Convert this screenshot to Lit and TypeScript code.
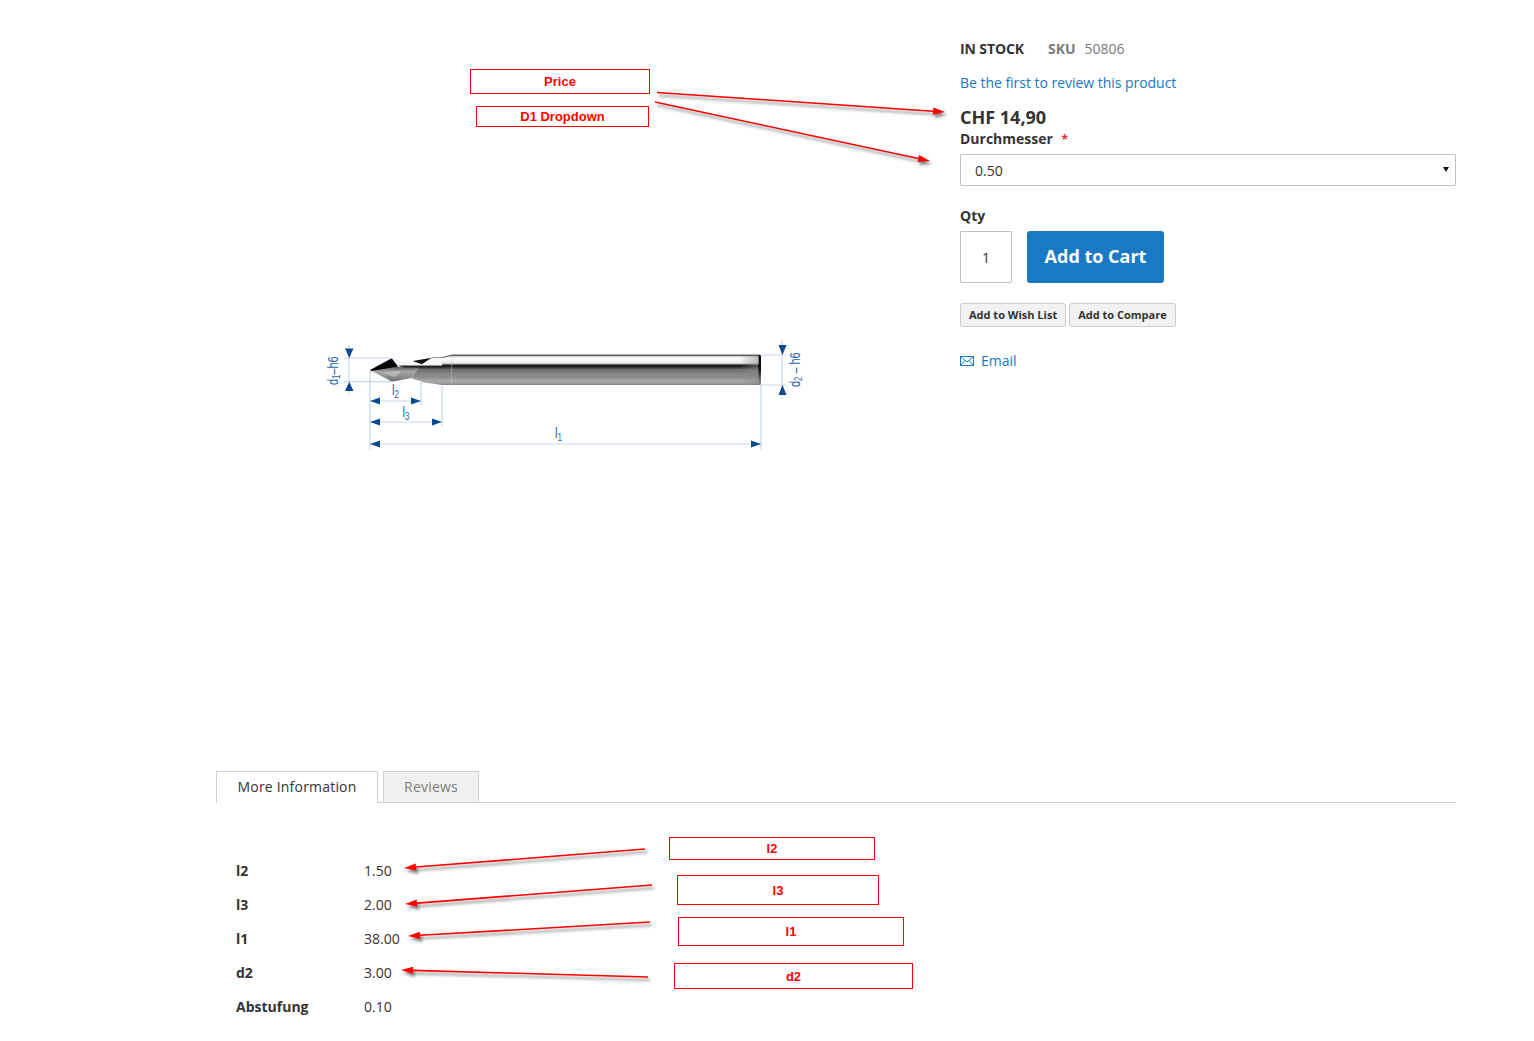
import { LitElement, html, css, svg } from "lit";
import { customElement } from "lit/decorators.js";

const BOXES = [
  { t: "Price", x: 470, y: 69, w: 180, h: 25 },
  { t: "D1 Dropdown", x: 476, y: 106, w: 173, h: 21 },
  { t: "l2", x: 669, y: 837, w: 206, h: 23 },
  { t: "l3", x: 677, y: 875, w: 202, h: 30 },
  { t: "l1", x: 678, y: 917, w: 226, h: 29 },
  { t: "d2", x: 674, y: 963, w: 239, h: 26 },
];

const ARROWS = [
  [657, 92.5, 945, 112],
  [655, 102, 930, 161],
  [645, 849, 404, 868],
  [652, 885, 405, 904],
  [650, 922, 408, 936],
  [648, 977, 401, 970],
];

const SPECS = [
  ["l2", "1.50"],
  ["l3", "2.00"],
  ["l1", "38.00"],
  ["d2", "3.00"],
  ["Abstufung", "0.10"],
];

function arrow([x1, y1, x2, y2]: number[]) {
  const a = Math.atan2(y2 - y1, x2 - x1);
  const L = 12, W = 3.6;
  const bx = x2 - L * Math.cos(a), by = y2 - L * Math.sin(a);
  const nx = -Math.sin(a) * W, ny = Math.cos(a) * W;
  return svg`<g class="red">
    <line x1=${x1} y1=${y1} x2=${bx} y2=${by}/>
    <path d="M${bx + nx} ${by + ny}L${x2} ${y2}L${bx - nx} ${by - ny}Z"/>
  </g>`;
}

const toolDrawing = svg`
  <svg class="tool" viewBox="320 340 490 115" width="490" height="115" aria-hidden="true">
    <defs>
      <linearGradient id="shaft" x1="0" y1="355" x2="0" y2="385" gradientUnits="userSpaceOnUse">
        <stop offset="0" stop-color="#444"/>
        <stop offset=".04" stop-color="#c8c8c8"/>
        <stop offset=".1" stop-color="#fff"/>
        <stop offset=".26" stop-color="#ececec"/>
        <stop offset=".3" stop-color="#aaa"/>
        <stop offset=".34" stop-color="#111"/>
        <stop offset=".4" stop-color="#2a2a2a"/>
        <stop offset=".48" stop-color="#6a6a6a"/>
        <stop offset=".62" stop-color="#858585"/>
        <stop offset=".76" stop-color="#909090"/>
        <stop offset=".86" stop-color="#aaa"/>
        <stop offset=".96" stop-color="#999"/>
        <stop offset="1" stop-color="#777"/>
      </linearGradient>
      <linearGradient id="cap" x1="0" y1="355" x2="0" y2="385" gradientUnits="userSpaceOnUse">
        <stop offset="0" stop-color="#000"/>
        <stop offset=".5" stop-color="#111"/>
        <stop offset=".8" stop-color="#444" stop-opacity=".6"/>
        <stop offset="1" stop-color="#555" stop-opacity=".3"/>
      </linearGradient>
      <linearGradient id="fade" x1="740" y1="0" x2="758" y2="0" gradientUnits="userSpaceOnUse">
        <stop offset="0" stop-color="#888" stop-opacity="0"/>
        <stop offset="1" stop-color="#888" stop-opacity=".55"/>
      </linearGradient>
      <linearGradient id="lip" x1="0" y1="366" x2="0" y2="382" gradientUnits="userSpaceOnUse">
        <stop offset="0" stop-color="#444"/>
        <stop offset=".35" stop-color="#a8a8a8"/>
        <stop offset=".7" stop-color="#8a8a8a"/>
        <stop offset="1" stop-color="#666"/>
      </linearGradient>
    </defs>
    <path fill="url(#shaft)" d="M442 357.7L452 355H760L761 385H452L442 385L423 382.3L411 378L420 366H442Z"/>
    <rect x="740" y="355" width="18" height="30" fill="url(#fade)"/>
    <rect x="758.5" y="355" width="2.5" height="30" fill="url(#cap)"/>
    <path fill="none" stroke="#333" stroke-width=".8" d="M431.7 357.7H442L452 355H760"/>
    <path fill="none" stroke="#ccc" stroke-width="1" d="M451.7 355.5V384.5" opacity=".5"/>
    <path fill="url(#lip)" d="M370 370L398 366L420 366L411 378L392 381.7Z"/>
    <path fill="#f4f4f4" d="M391.7 358.3L413 364.5L398 367Z"/>
    <path fill="#f6f6f6" d="M412 361.7L431.7 357.7H442V365H422Z"/>
    <path fill="#111" d="M412.7 361L431.7 357.7L421.7 364.3Z"/>
    <path fill="#050505" d="M370 370L391.7 358.3L398 366.5L371 371Z"/>
    <path fill="#222" d="M398 365.6H442V367.6H405Z"/>
    <path fill="#ddd" d="M382 373L402 370.5L395 377Z" opacity=".4"/>

    <g class="dim">
      <path d="M344 358H392M344 381.7H392M349 345V395M370 371V449M421 380V405M442 386V426M370 401H421M370 422H442M370 444H761M761 386V449M760 355H786M760 385H786M782 340V399"/>
    </g>
    <g class="arw">
      <path d="M345 348.5H353.5L349.2 358ZM345 391H353.5L349.2 381.7Z"/>
      <path d="M370 401L380 397.5V404.5ZM421 401L411 397.5V404.5Z"/>
      <path d="M370 422L380 418.5V425.5ZM442 422L432 418.5V425.5Z"/>
      <path d="M370 444L380 440.5V447.5ZM761 444L751 440.5V447.5Z"/>
      <path d="M778.5 345H786.5L782.5 355ZM778.5 395H786.5L782.5 385Z"/>
    </g>
    <g class="lbl">
      <text transform="translate(392 395) scale(.8 1)">l<tspan class="sub" dy="3">2</tspan></text>
      <text transform="translate(402.5 417) scale(.8 1)">l<tspan class="sub" dy="3">3</tspan></text>
      <text transform="translate(555 438) scale(.8 1)">l<tspan class="sub" dy="3">1</tspan></text>
      <text transform="translate(338 385) rotate(-90) scale(.78 1)">d<tspan class="sub" dy="2">1</tspan><tspan dy="-2">–h6</tspan></text>
      <text transform="translate(800 387) rotate(-90) scale(.78 1)">d<tspan class="sub" dy="2">2</tspan><tspan dy="-2"> – h6</tspan></text>
    </g>
  </svg>
`;

@customElement("app-root")
export class AppRoot extends LitElement {
  static styles = css`
    :host {
      display: block;
      position: relative;
      width: 1534px;
      height: 1041px;
      overflow: hidden;
      background: #fff;
      color: #333;
      font-family: "Open Sans", "Noto Sans", sans-serif;
      font-size: 14px;
    }
    .page { padding: 0 78px 0 216px; }
    .top { display: flex; height: 771px; }
    .gallery { width: 744px; flex: none; padding: 340px 0 0 104px; box-sizing: border-box; }
    .tool { display: block; }
    .dim path { fill: none; stroke: #c6d6e8; stroke-width: 1.2; }
    .arw path { fill: #0b4a90; }
    .lbl text { fill: #1d5fa8; font: 14px "Liberation Sans", sans-serif; }
    .lbl .sub { font-size: 10px; }

    .info { width: 496px; flex: none; padding-top: 39px; box-sizing: border-box; }
    .stock { display: flex; line-height: 20px; }
    .stock b { font-weight: 700; }
    .instock { width: 88px; color: #333; font-weight: 700; letter-spacing: -0.1px; }
    .sku { color: #7a7a7a; }
    .sku b { margin-right: 9px; color: #7a7a7a; }
    a { color: #1979c3; text-decoration: none; }
    .review { display: block; margin-top: 14px; line-height: 20px; letter-spacing: -0.03px; }
    .price { margin-top: 12px; font-size: 18px; font-weight: 700; line-height: 25px; }
    .label { font-weight: 700; line-height: 18px; }
    .req { color: #e02b27; margin-left: 5px; font-size: 12px; }
    .select-wrap { position: relative; margin-top: 5px; }
    .select-wrap::after {
      content: "";
      position: absolute;
      right: 7px;
      top: 13px;
      border-style: solid;
      border-width: 5px 3px 0;
      border-color: #111 transparent transparent;
    }
    select {
      display: block;
      width: 100%;
      height: 32px;
      padding: 0 0 0 14px;
      box-sizing: border-box;
      border: 1px solid #c2c2c2;
      border-radius: 1px;
      background: #fff;
      color: #333;
      appearance: none;
      font: 14px "Open Sans", sans-serif;
    }
    .qty { margin-top: 21px; }
    .controls { display: flex; gap: 15px; margin-top: 6px; }
    input {
      width: 52px;
      height: 52px;
      padding: 0;
      box-sizing: border-box;
      border: 1px solid #c2c2c2;
      border-radius: 1px;
      color: #333;
      text-align: center;
      font: 14px "Open Sans", sans-serif;
    }
    .cart {
      width: 137px;
      height: 52px;
      padding: 0 0 2px;
      border: 0;
      border-radius: 3px;
      background: #1979c3;
      color: #fff;
      font: 700 18px "Open Sans", sans-serif;
    }
    .secondary { display: flex; gap: 3px; margin-top: 20px; }
    .secondary button {
      height: 24px;
      padding: 0 8px 2px;
      border: 1px solid #cdcdcd;
      border-radius: 3px;
      background: #f2f2f2;
      color: #333;
      font: 700 11px "Open Sans", sans-serif;
    }
    .email { display: flex; align-items: center; gap: 7px; margin-top: 24px; line-height: 20px; color: #1979c3; }
    .email svg { display: block; }

    .tabs { display: flex; gap: 5px; height: 31px; border-bottom: 1px solid #d1d1d1; }
    .tab {
      height: 31px;
      box-sizing: border-box;
      border: 1px solid #d1d1d1;
      border-bottom: 0;
      line-height: 30px;
      text-align: center;
      background: #f0f0f0;
      color: #7d7d7d;
      width: 96px;
      letter-spacing: 0.2px;
    }
    .tab.on { width: 162px; height: 32px; background: #fff; color: #333; }
    table { margin: 51px 0 0; border-collapse: collapse; }
    th { width: 128px; height: 34px; padding: 0 0 0 20px; text-align: left; font-weight: 700; }
    td { height: 34px; padding: 0; }
    th, td { line-height: 20px; }

    .overlay { position: absolute; left: 0; top: 0; pointer-events: none; }
    .red { filter: drop-shadow(2px 3px 1.5px rgba(0, 0, 0, 0.5)); }
    .red line { stroke: #f00; stroke-width: 1.6; }
    .red path { fill: #f00; }
    .box {
      position: absolute;
      box-sizing: border-box;
      border: 1px solid #f00;
      display: flex;
      align-items: center;
      justify-content: center;
      color: #f00;
      font: 700 13px "Liberation Sans", sans-serif;
    }
  `;

  render() {
    return html`
      <div class="page">
        <div class="top">
          <div class="gallery">${toolDrawing}</div>
          <div class="info">
            <div class="stock">
              <span class="instock">IN STOCK</span>
              <span class="sku"><b>SKU</b>50806</span>
            </div>
            <a class="review" href="#">Be the first to review this product</a>
            <div class="price">CHF 14,90</div>
            <div class="label">Durchmesser <span class="req">*</span></div>
            <div class="select-wrap"><select><option>0.50</option></select></div>
            <div class="label qty">Qty</div>
            <div class="controls">
              <input value="1" />
              <button class="cart">Add to Cart</button>
            </div>
            <div class="secondary">
              <button>Add to Wish List</button>
              <button>Add to Compare</button>
            </div>
            <a class="email" href="#">
              <svg width="14" height="10" viewBox="0 0 14 10" fill="none" stroke="#1979c3" stroke-width="1">
                <rect x=".5" y=".5" width="13" height="9"/>
                <path d="M.5 .5L7 6L13.5 .5M.5 9.5L5 4.5M13.5 9.5L9 4.5"/>
              </svg>
              Email
            </a>
          </div>
        </div>
        <div class="tabs">
          <div class="tab on">More Information</div>
          <div class="tab">Reviews</div>
        </div>
        <table>
          ${SPECS.map(([k, v]) => html`<tr><th>${k}</th><td>${v}</td></tr>`)}
        </table>
      </div>
      <svg class="overlay" width="1534" height="1041" viewBox="0 0 1534 1041" aria-hidden="true">
        ${ARROWS.map(arrow)}
      </svg>
      ${BOXES.map(
        (b) => html`<div class="box" style="left:${b.x}px;top:${b.y}px;width:${b.w}px;height:${b.h}px">${b.t}</div>`
      )}
    `;
  }
}
